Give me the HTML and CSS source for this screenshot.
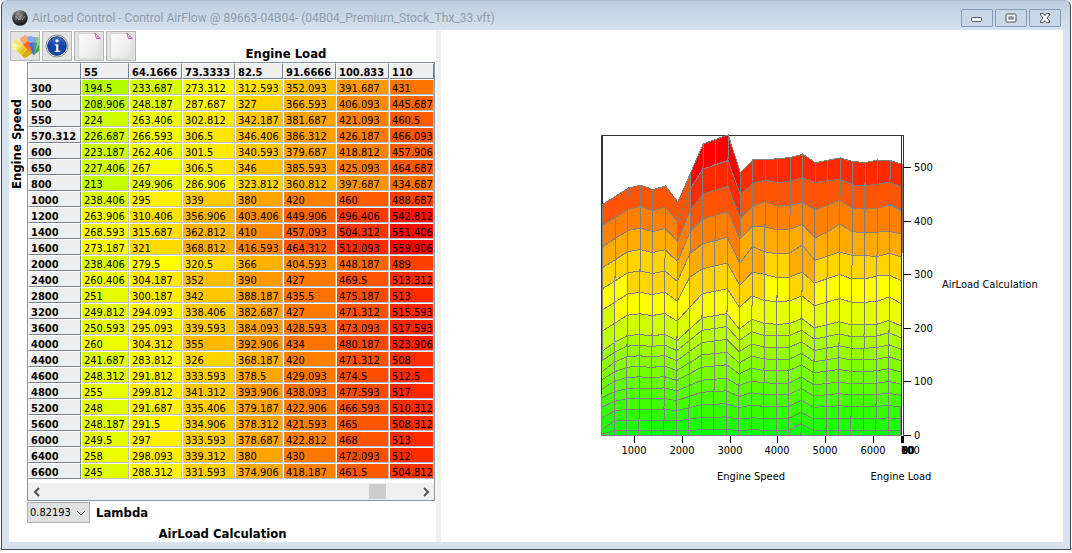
FILE: index.html
```html
<!DOCTYPE html>
<html lang="en">
<head>
<meta charset="utf-8">
<title>AirLoad Control</title>
<link rel="stylesheet" href="styles.css">
</head>
<body>
<div class="window">
  <header class="titlebar">
    <svg class="app-icon" viewBox="0 0 16 16" aria-hidden="true">
      <defs><radialGradient id="ball" cx=".4" cy=".2" r=".8"><stop offset="0" stop-color="#999"/><stop offset=".5" stop-color="#444"/><stop offset="1" stop-color="#151515"/></radialGradient></defs>
      <circle cx="8" cy="8" r="7.8" fill="url(#ball)"/>
      <path d="M4 10V6l3 4V6M8 10V6h3M8 8h2M10 10l3-4" fill="none" stroke="#aaa" stroke-width=".8"/>
    </svg>
    <h1 class="title">AirLoad Control - Control AirFlow @ 89663-04B04- (04B04_Premium_Stock_Thx_33.vft)</h1>
    <div class="window-buttons">
      <button class="window-button" aria-label="Minimize"><svg width="14" height="12" viewBox="0 0 14 12"><rect x="1.500" y="5.500" width="10" height="4" rx="1" fill="#fff" stroke="#4d5560"/></svg></button>
      <button class="window-button" aria-label="Maximize"><svg width="14" height="12" viewBox="0 0 14 12"><rect x="2" y="2" width="10" height="8" rx="1" fill="#fff" stroke="#4d5560"/><rect x="5" y="5" width="4" height="2" fill="#dbe5f0" stroke="#4d5560"/></svg></button>
      <button class="window-button" aria-label="Close"><svg width="14" height="12" viewBox="0 0 14 12"><path d="M2.500 1.500h3L7 3.500l1.500-2h3v1.500L9 6l2.500 3v1.500h-3L7 8.500l-1.500 2h-3V9L5 6 2.500 3z" fill="#fff" stroke="#4d5560" stroke-linejoin="round"/></svg></button>
    </div>
  </header>
  <main class="content">
    <section class="table-pane">
      <div class="toolbar">
        <button class="tool" aria-label="Colors"><svg width="30" height="28" viewBox="0 0 30 28">
          <path d="M23 25l5-21 2 1v14z" fill="#7fe07c"/><path d="M24 24l6-12v7z" fill="#2fae35"/>
          <path d="M22 22l1-18 5 1-3 18z" fill="#8f9fc4"/><path d="M23 22l1-12 4 1-3 13z" fill="#5c8f8c"/>
          <path d="M21 22L16 4l7-1 2 19z" fill="#8fa9fa"/><path d="M21 22l-3-11 6-1 1 12z" fill="#4470dc"/>
          <path d="M19 23L9 6l7-4 7 20z" fill="#fba86c"/><path d="M20 23l-7-11 6-3 4 13z" fill="#ef6a35"/>
          <path d="M15 27L0 14l5-8 17 16z" fill="#f6e568"/><path d="M0 14l3-4 5 4-4 4z" fill="#fbf6a8"/>
          <path d="M15 27l-8-7 6-7 9 9z" fill="#e6c41c"/><path d="M15 27l-4-4 6-6 5 5z" fill="#d9a912"/>
          <path d="M4 18l6-7M8 21l6-7M11 24l6-7" stroke="#fff3a0" stroke-width=".6"/>
        </svg></button>
        <button class="tool" aria-label="Information"><svg width="30" height="28" viewBox="0 0 30 28">
          <defs><linearGradient id="info" x2="0" y2="1"><stop stop-color="#4a70c8"/><stop offset=".5" stop-color="#153d9f"/><stop offset="1" stop-color="#164cae"/></linearGradient></defs>
          <circle cx="15" cy="14" r="11.800" fill="#eee" stroke="#6e6e6e" stroke-width=".8"/><circle cx="15" cy="14" r="10" fill="url(#info)" stroke="#0d2d78"/>
          <circle cx="15" cy="8.500" r="1.800" fill="#fff"/><path d="M12.500 12h4v7h2v1.500h-6V19h1.500v-5.500h-1.500z" fill="#e8edf8"/>
        </svg></button>
        <button class="tool" aria-label="New page"><svg width="30" height="28" viewBox="0 0 30 28"><defs><linearGradient id="page" x2="1" y2="1"><stop stop-color="#fff"/><stop offset="1" stop-color="#e2e2e2"/></linearGradient></defs><path d="M4 .5h18l5 5v22H4z" fill="url(#page)" stroke="#d4d4d4"/><path d="M21 0l6 6h-4z" fill="#f3d5f0" stroke="#b45bb0"/></svg></button>
        <button class="tool" aria-label="Copy page"><svg width="30" height="28" viewBox="0 0 30 28"><path d="M4 .5h18l5 5v22H4z" fill="url(#page)" stroke="#d4d4d4"/><path d="M21 0l6 6h-4z" fill="#f3d5f0" stroke="#b45bb0"/></svg></button>
      </div>
      <div class="map">
        <div class="y-title">Engine Speed</div>
        <div class="map-main">
          <h2 class="x-title">Engine Load</h2>
          <div class="grid-frame">
            <table class="grid">
              <colgroup><col class="wide"><col class="narrow"><col class="wide"><col class="wide"><col class="narrow"><col class="wide"><col class="wide"><col class="last"></colgroup>
              <thead><tr id="loads"><td></td></tr></thead>
              <tbody id="rows"></tbody>
            </table>
            <div class="scrollbar">
              <button class="arrow" aria-label="Scroll left"><svg width="8" height="10" viewBox="0 0 8 10"><path d="M6 1L2 5l4 4" fill="none" stroke="#505050" stroke-width="2"/></svg></button>
              <div class="track"><div class="thumb"></div></div>
              <button class="arrow" aria-label="Scroll right"><svg width="8" height="10" viewBox="0 0 8 10"><path d="M2 1l4 4-4 4" fill="none" stroke="#505050" stroke-width="2"/></svg></button>
            </div>
          </div>
          <div class="lambda-row">
            <span class="select-wrap">
              <select id="lambda" class="lambda"><option>0.82193</option></select>
              <svg class="chevron" width="10" height="6" viewBox="0 0 10 6"><path d="M1 1l4 4 4-4" fill="none" stroke="#555"/></svg>
            </span>
            <label class="lambda-label" for="lambda">Lambda</label>
          </div>
        </div>
      </div>
      <h2 class="z-title">AirLoad Calculation</h2>
    </section>
    <div class="divider"></div>
    <section class="chart-pane">
      <svg class="chart" width="440" height="360" viewBox="600 130 440 360" role="img" aria-label="AirLoad Calculation surface">
        <path class="frame" d="M601.500 436.500V136.500H903.500V436.500M602.500 136.500V250"/>
        <g id="surface"></g>
        <path class="frame" d="M601.500 300V395M901.500 136.500V436.500M903.500 136.500V436.500"/>
        <path class="tick" d="M901.500 437v7M902.500 437v7M903.500 437v7"/>
        <g id="axes"></g>
        <text x="751" y="481" text-anchor="middle">Engine Speed</text>
        <text x="901" y="481" text-anchor="middle">Engine Load</text>
        <text x="942" y="289">AirLoad Calculation</text>
      </svg>
    </section>
  </main>
</div>
<script src="app.js"></script>
</body>
</html>
```
FILE: styles.css
```css
* { box-sizing: border-box; }
body {
  margin: 0;
  background: #fff;
  color: #000;
  font: 11px/14px "DejaVu Sans Condensed", "Noto Sans", sans-serif;
}
button { padding: 0; font: inherit; }
h1, h2 { margin: 0; }
.window {
  display: flex;
  flex-direction: column;
  min-height: calc(100vh - 3px);
  margin: 0 1px;
  padding: 0 7px 7px;
  border: 1px solid #4a4d52;
  border-top-color: #b0bccb;
  border-radius: 6px 6px 0 0;
  background: linear-gradient(#bfcddd, #d6e2ef 30px);
}
.titlebar { display: flex; align-items: center; height: 29px; padding: 4px 2px 0 3px; }
.app-icon { width: 16px; height: 16px; }
.title { flex: 1; margin-left: 4px; color: #919ba7; font: 12px/16px Roboto, sans-serif; white-space: nowrap; }
.window-buttons { display: flex; gap: 2px; }
.window-button {
  display: flex;
  align-items: center;
  justify-content: center;
  width: 32px;
  height: 18px;
  border: 1px solid #8499b5;
  border-radius: 1px;
  background: #c9d6e5;
}
.content { display: flex; flex: 1; background: #fff; }
.table-pane { display: flex; flex-direction: column; width: 427px; }
.divider { width: 5px; background: #f0f0f0; }
.chart-pane { display: flex; flex: 1; align-items: center; justify-content: flex-end; padding: 46px 23px 0 0; }
.toolbar { display: flex; gap: 2px; height: 16px; padding: 1px; }
.tool { display: flex; width: 30px; height: 30px; flex: none; border: 1px solid #b4b4b4; background: #e3e3e3; align-items: center; justify-content: center; }
.map { display: flex; }
.y-title {
  width: 18px;
  padding: 0;
  margin-top: 53px;
  align-self: flex-start;
  font: bold 13px/16px "DejaVu Sans Condensed", sans-serif;
  writing-mode: vertical-rl;
  transform: rotate(180deg);
}
.map-main { width: 408px; }
.x-title, .z-title, .lambda-label { font: bold 13px/16px "DejaVu Sans Condensed", sans-serif; }
.x-title { padding-left: 110px; text-align: center; }
.grid-frame { border: 1px solid #8294a5; }
.grid { width: 406px; border-collapse: separate; border-spacing: 0; table-layout: fixed; }
.wide { width: 53px; }
.narrow { width: 48px; }
.last { width: 45px; }
.grid td, .grid th {
  height: 16px;
  padding: 4px 0 0 2px;
  overflow: hidden;
  border: 1px solid #fff;
  border-right-color: #bdbdbd;
  border-bottom-color: #bdbdbd;
  line-height: 10px;
  text-align: left;
  white-space: nowrap;
}
.grid th, .grid thead td { border-right-color: #75818c; border-bottom-color: #75818c; background: #efefef; }
.scrollbar { display: flex; height: 17px; margin-top: 4px; background: #f0f0f0; }
.arrow { display: flex; align-items: center; justify-content: center; width: 17px; border: 0; background: none; }
.track { display: flex; flex: 1; justify-content: flex-end; padding: 1px 31px 1px 0; }
.thumb { width: 17px; background: #cdcdcd; }
.lambda-row { display: flex; align-items: center; gap: 6px; margin-top: 1px; }
.select-wrap { position: relative; display: flex; }
.lambda {
  width: 63px;
  height: 21px;
  padding: 0 2px;
  appearance: none;
  border: 1px solid #adadad;
  border-radius: 0;
  background: #e1e1e1;
  color: #000;
  font: 11px/14px "DejaVu Sans Condensed", sans-serif;
}
.chevron { position: absolute; right: 4px; top: 8px; pointer-events: none; }
.z-title { margin-top: 3px; text-align: center; }
.chart { overflow: visible; }
.chart text { font-size: 11px; }
.frame { fill: none; stroke: #333; }
.tick { stroke: #000; }
.cell { stroke: #808080; }
```
FILE: app.js
```
const loads = ["55", "64.1666", "73.3333", "82.5", "91.6666", "100.833", "110"];
const data = `300 194.5 233.687 273.312 312.593 352.093 391.687 431
500 208.906 248.187 287.687 327 366.593 406.093 445.687
550 224 263.406 302.812 342.187 381.687 421.093 460.5
570.312 226.687 266.593 306.5 346.406 386.312 426.187 466.093
600 223.187 262.406 301.5 340.593 379.687 418.812 457.906
650 227.406 267 306.5 346 385.593 425.093 464.687
800 213 249.906 286.906 323.812 360.812 397.687 434.687
1000 238.406 295 339 380 420 460 488.687
1200 263.906 310.406 356.906 403.406 449.906 496.406 542.812
1400 268.593 315.687 362.812 410 457.093 504.312 551.406
1600 273.187 321 368.812 416.593 464.312 512.093 559.906
2000 238.406 279.5 320.5 366 404.593 448.187 489
2400 260.406 304.187 352 390 427 469.5 513.312
2800 251 300.187 342 388.187 435.5 475.187 513
3200 249.812 294.093 338.406 382.687 427 471.312 515.593
3600 250.593 295.093 339.593 384.093 428.593 473.093 517.593
4000 260 304.312 355 392.906 434 480.187 523.906
4400 241.687 283.812 326 368.187 420 471.312 508
4600 248.312 291.812 333.593 378.5 429.093 474.5 512.5
4800 255 299.812 341.312 393.906 438.093 477.593 517
5200 248 291.687 335.406 379.187 422.906 466.593 510.312
5600 248.187 291.5 334.906 378.312 421.593 465 508.312
6000 249.5 297 333.593 378.687 422.812 468 513
6400 258 298.093 339.312 380 430 472.093 512
6600 245 288.312 331.593 374.906 418.187 461.5 504.812`.split("\n").map(r => r.split(" "));

// Green at 0, yellow at half of the peak, red at the peak.
const PEAK = 560;
function heat(v) {
  const t = Math.max(0, Math.min(2, v / PEAK * 2));
  return t < 1 ? `rgb(${Math.round(255 * t)},255,0)` : `rgb(255,${Math.round(255 * (2 - t))},0)`;
}

const header = document.getElementById("loads");
for (const load of loads) {
  const th = document.createElement("th");
  th.scope = "col";
  th.textContent = load;
  header.append(th);
}
const body = document.getElementById("rows");
for (const [speed, ...values] of data) {
  const tr = document.createElement("tr");
  const th = document.createElement("th");
  th.scope = "row";
  th.textContent = speed;
  tr.append(th);
  for (const value of values) {
    const td = document.createElement("td");
    td.textContent = value;
    td.style.background = heat(+value);
    tr.append(td);
  }
  body.append(tr);
}

function svg(parent, name, attributes, text) {
  const node = document.createElementNS("http://www.w3.org/2000/svg", name);
  for (const key in attributes) node.setAttribute(key, attributes[key]);
  if (text) node.textContent = text;
  parent.append(node);
}

// Surface levels for the loads below 55, as shares of the value at 55.
const lower = [.83, .742, .655, .568, .482, .39, .305, .217, .127, .04, 0];
const first = [.807, .715, .61, .533, .443, .361, .27, .17, .055, .012, 0];
const levels = data.map(([, ...values], i) => {
  const v = values.map(Number);
  const shares = i === 0 ? first : lower;
  const bump = i === 16 ? 12 : 0;
  return [...v.slice().reverse(), ...shares.map(s => s && s * v[0] + bump * (1 - s))];
});
const SCALE = .537, BASE = 436.5;
function point(i, k) {
  const y = BASE - levels[i][k] * SCALE;
  const x = 601.5 + i * 12.47 + (BASE - y) / 300 * 2;
  return [Math.min(x, 902.5).toFixed(1), y.toFixed(1)];
}
const surface = document.getElementById("surface");
for (let k = 0; k < levels[0].length - 1; k++) {
  for (let i = 0; i < data.length - 1; i++) {
    const top = Math.max(levels[i][k], levels[i + 1][k]);
    const band = k < 6 ? Math.round(top / PEAK * 12) * PEAK / 12 : top;
    svg(surface, "polygon", {
      class: "cell",
      "shape-rendering": "crispEdges",
      points: [point(i, k), point(i + 1, k), point(i + 1, k + 1), point(i, k + 1)].join(" "),
      fill: heat(band)
    });
  }
}

const axes = document.getElementById("axes");
for (let n = 1; n <= 6; n++) {
  const x = Math.round(586.5 + n * 47.7);
  svg(axes, "path", { class: "tick", d: `M${x + .5} 437v7` });
  svg(axes, "text", { x, y: 455, "text-anchor": "middle" }, String(n * 1000));
}
for (let n = 0; n <= 5; n++) {
  const y = Math.round(436 - n * 53.6);
  svg(axes, "path", { class: "tick", d: `M904 ${y + .5}h7` });
  svg(axes, "text", { x: 914, y: y + 4 }, String(n * 100));
}
[60, 70, 80, 90].forEach((n, i) => svg(axes, "text", { x: 901 + (i >> 1), y: 455 }, String(n)));
svg(axes, "text", { x: 901, y: 455 }, "100");
```
